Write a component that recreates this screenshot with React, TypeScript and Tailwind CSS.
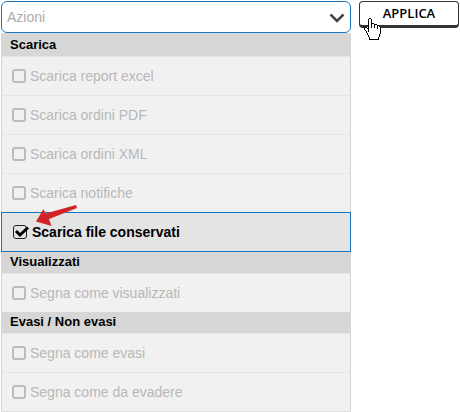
import { useState } from "react";

type Group = {
  title: string;
  items: string[];
};

const groups: Group[] = [
  {
    title: "Scarica",
    items: [
      "Scarica report excel",
      "Scarica ordini PDF",
      "Scarica ordini XML",
      "Scarica notifiche",
      "Scarica file conservati",
    ],
  },
  { title: "Visualizzati", items: ["Segna come visualizzati"] },
  {
    title: "Evasi / Non evasi",
    items: ["Segna come evasi", "Segna come da evadere"],
  },
];

// pixel rows of the pointing hand
const hand = [
  ".....XX",
  "....X..X",
  "....X..X",
  "....X..X",
  "....X..X",
  "....X..XXX",
  "....X..X..XXX",
  "....X..X..X..XX",
  "....X..X..X..X.X",
  "XXX.X..X..X..X..X",
  "X..XX........X..X",
  "X...X...........X",
  ".X..X...........X",
  "..X.X...........X",
  "..X.............X",
  "...X............X",
  "...X...........X",
  "....X..........X",
  "....X..........X",
  ".....X........X",
  ".....X........X",
  ".....XXXXXXXXXX",
];

function HandCursor() {
  return (
    <svg
      className="pointer-events-none absolute top-[17px] left-[5px]"
      width="17"
      height="22"
      shapeRendering="crispEdges"
      aria-hidden="true"
    >
      {hand.map((row, y) => (
        <g key={y}>
          <rect
            x={row.indexOf("X")}
            y={y}
            width={row.length - row.indexOf("X")}
            height="1"
            fill="#fff"
          />
          {row.split("").map((c, x) =>
            c === "X" ? <rect key={x} x={x} y={y} width="1" height="1" /> : null
          )}
        </g>
      ))}
    </svg>
  );
}

function RedArrow() {
  return (
    <svg
      className="pointer-events-none absolute -top-2 left-8"
      width="44"
      height="22"
      aria-hidden="true"
    >
      <path
        d="M2 16.5 L9.5 4 L11.5 8.5 L42 0 L43 3 L15 14 L17.5 21 Z"
        fill="#d3232a"
      />
    </svg>
  );
}

function Item({
  label,
  checked,
  onToggle,
}: {
  label: string;
  checked: boolean;
  onToggle: () => void;
}) {
  return (
    <li
      className={
        checked
          ? "relative border border-[#1b75bc] bg-[#e4e4e4]"
          : "border-x border-t border-x-[#d4d4d4] border-t-[#e5e5e5] bg-[#f1f1f1]"
      }
    >
      <label
        className={`flex h-[38px] items-center text-sm ${
          checked
            ? "gap-[5px] pl-[11px] font-bold text-black"
            : "gap-1 pl-2.5 text-[#b8b8b8]"
        }`}
      >
        <span className="relative flex">
          <input
            type="checkbox"
            checked={checked}
            onChange={onToggle}
            className="size-3.5 appearance-none rounded-[3px] border-2 border-[#bcbcbc] checked:border checked:border-[#222]"
          />
          {checked && (
            <svg
              className="pointer-events-none absolute top-0 left-0"
              width="17"
              height="14"
              fill="none"
              stroke="#000"
              strokeWidth="3"
              aria-hidden="true"
            >
              <path d="M3 6 L7 10 L15 2.5" />
            </svg>
          )}
        </span>
        {label}
      </label>
      {checked && <RedArrow />}
    </li>
  );
}

export default function App() {
  const [selected, setSelected] = useState("Scarica file conservati");

  return (
    <div className="flex items-start gap-2 bg-white pt-px pr-px pl-px font-['Liberation_Sans',Arial,sans-serif]">
      <div className="min-w-0 flex-1">
        <div className="relative">
          <select
            aria-label="Azioni"
            className="block h-8 w-full appearance-none rounded-md border border-[#1b75bc] bg-white pl-[5px] text-sm text-[#aaa]"
          >
            <option>Azioni</option>
          </select>
          <svg
            className="pointer-events-none absolute top-3 right-1.5"
            width="16"
            height="10"
            fill="none"
            stroke="#444"
            strokeWidth="2.5"
            aria-hidden="true"
          >
            <path d="M1.5 1.5 L8 8 L14.5 1.5" />
          </svg>
        </div>

        {groups.map((group, i) => (
          <section key={group.title}>
            <h2
              className={`bg-[#d7d7d7] pl-[9px] text-[13px] font-bold text-black ${
                i === 0 ? "h-[23px] leading-6" : "h-[21px] leading-5"
              }`}
            >
              {group.title}
            </h2>
            <ul>
              {group.items.map((label) => (
                <Item
                  key={label}
                  label={label}
                  checked={label === selected}
                  onToggle={() => setSelected(label === selected ? "" : label)}
                />
              ))}
            </ul>
          </section>
        ))}
        <div className="h-px bg-[#e0e0e0]" />
      </div>

      <div className="relative shrink-0">
        <button
          type="button"
          className="block h-[27px] w-[100px] rounded border border-b-3 border-[#333] bg-white font-['Open_Sans',sans-serif] text-[13px] font-semibold text-black"
        >
          APPLICA
        </button>
        <HandCursor />
      </div>
    </div>
  );
}
